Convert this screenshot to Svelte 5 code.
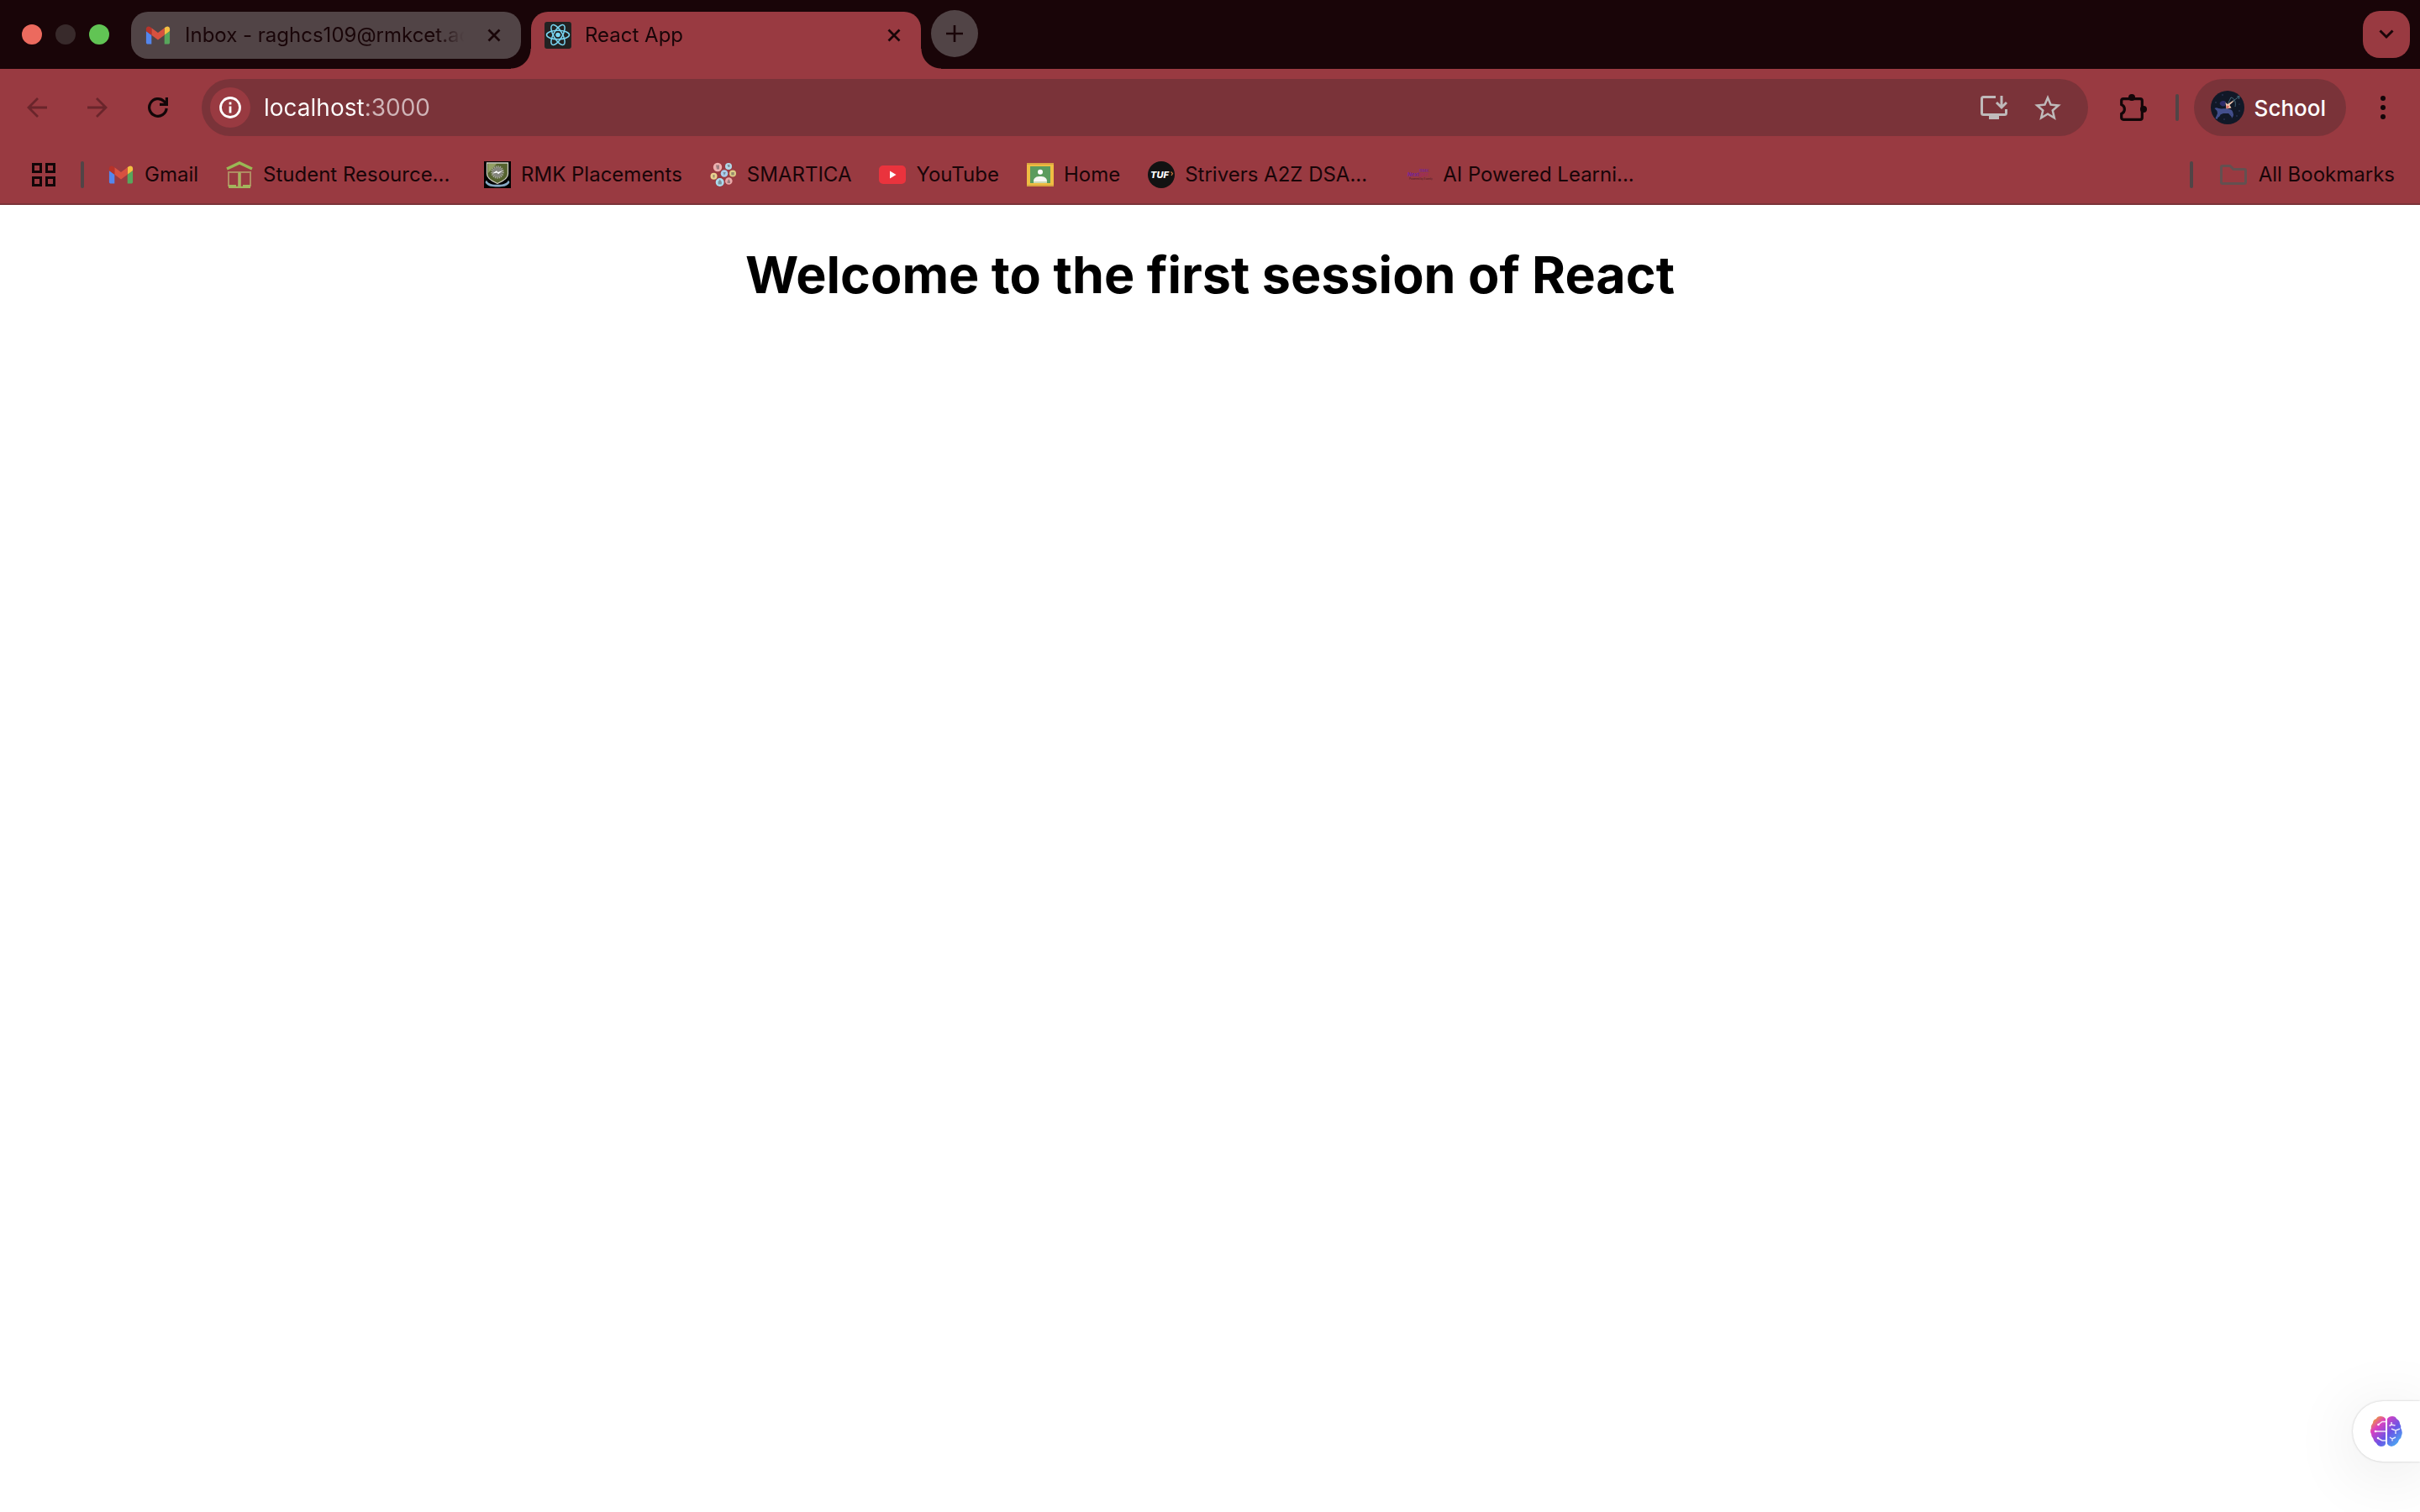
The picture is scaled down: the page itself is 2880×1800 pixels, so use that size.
<script>
  const tabs = [
    { title: 'Inbox - raghcs109@rmkcet.ac', icon: 'gmail', active: false },
    { title: 'React App', icon: 'react', active: true }
  ];

  const bookmarks = [
    { title: 'Gmail', icon: 'gmail' },
    { title: 'Student Resource...', icon: 'library', long: true },
    { title: 'RMK Placements', icon: 'crest' },
    { title: 'SMARTICA', icon: 'dots' },
    { title: 'YouTube', icon: 'youtube' },
    { title: 'Home', icon: 'classroom' },
    { title: 'Strivers A2Z DSA...', icon: 'tuf', long: true },
    { title: 'AI Powered Learni...', icon: 'nextgen', long: true }
  ];

  let address = $state('localhost:3000');
</script>

{#snippet favicon(name)}
  {#if name === 'gmail'}
    <svg class="favicon" viewBox="46 25 100 100" aria-hidden="true">
      <path fill="#5486ec" d="M58 108h14V74L52 59v43c0 3.32 2.69 6 6 6" />
      <path fill="#58a65c" d="M120 108h14c3.32 0 6-2.69 6-6V59l-20 15" />
      <path fill="#f3bf42" d="M120 48v26l20-15v-8c0-7.42-8.47-11.65-14.4-7.2" />
      <path fill="#d85140" d="M72 74V48l24 18 24-18v26L96 92" />
      <path fill="#b8332a" d="M52 51v8l20 15V48l-5.6-4.2c-5.94-4.45-14.4-.22-14.4 7.2" />
    </svg>
  {:else if name === 'react'}
    <svg class="favicon" viewBox="0 0 32 32" aria-hidden="true">
      <rect width="32" height="32" rx="3" fill="#222" />
      <g fill="none" stroke="#79d6f3" stroke-width="1.5">
        <ellipse cx="16" cy="15.5" rx="13.5" ry="5.2" />
        <ellipse cx="16" cy="15.5" rx="13.5" ry="5.2" transform="rotate(60 16 15.5)" />
        <ellipse cx="16" cy="15.5" rx="13.5" ry="5.2" transform="rotate(120 16 15.5)" />
      </g>
      <circle cx="16" cy="15.5" r="2.8" fill="#79d6f3" />
    </svg>
  {:else if name === 'library'}
    <svg class="favicon" viewBox="0 0 32 32" aria-hidden="true">
      <path d="M1 9 L16 2 L31 9" fill="none" stroke="#9ab955" stroke-width="3.4" />
      <g fill="none" stroke="#b08a62" stroke-width="2">
        <path d="M3 30V13H15V30M17 30V13H29V30" />
      </g>
      <path d="M16 13V30M3 31H29" stroke="#a3b55c" stroke-width="2.4" fill="none" />
      <path d="M3 29h9M20 29h9" stroke="#a3b55c" stroke-width="2" />
    </svg>
  {:else if name === 'crest'}
    <svg class="favicon" viewBox="0 0 32 32" aria-hidden="true">
      <rect width="32" height="32" fill="#020202" />
      <path d="M3.5 2H28.5V15C28.5 20 22 24 16 26.5C10 24 3.5 20 3.5 15Z" fill="#56632f" stroke="#cfcfc4" stroke-width="1.3" />
      <path d="M5 3H15L5 14Z" fill="#93a064" />
      <circle cx="16" cy="13" r="6" fill="#85857d" />
      <circle cx="16" cy="13" r="6.6" fill="none" stroke="#a5a59c" stroke-width="2.4" stroke-dasharray="1.4 1" />
      <path d="M9.5 14.8L15 11.2L16.5 13L22.5 11L17 15.2L15.4 13.6Z" fill="#fff" />
      <path d="M3 22.5C5 27.5 11 27.8 16 27.8S27 27.5 29 22.5L30.5 25C28 30 22 30.5 16 30.5S4 30 1.5 25Z" fill="#86a9c4" />
    </svg>
  {:else if name === 'dots'}
    <svg class="favicon" viewBox="0 0 32 32" aria-hidden="true">
      <circle cx="9" cy="7" r="5.2" fill="#edb0af" />
      <circle cx="22" cy="6" r="4" fill="#b1d9e8" />
      <circle cx="17" cy="14.5" r="4.3" fill="#a9cdec" />
      <circle cx="27" cy="14.5" r="4" fill="#dccb86" />
      <circle cx="4.5" cy="17.7" r="4" fill="#e9d18e" />
      <circle cx="11.7" cy="25" r="5" fill="#abdcee" />
      <circle cx="22.3" cy="23.5" r="4.3" fill="#eaa9a9" />
      <g fill="#5b5458" opacity="0.55">
        <path d="M7 4.5h4v5H8zM20.5 4h3v3h-2zM15.5 13h3.4l-2 4zM25.3 13h3.4v3.4h-3.4zM3.5 16h2v3.4h-2zM9.6 24.5l2.1-3 2.1 3v3H9.6zM20.6 24l1.7-3 1.7 3v2h-3.4z" />
      </g>
    </svg>
  {:else if name === 'youtube'}
    <svg class="favicon" viewBox="0 0 32 32" aria-hidden="true">
      <rect y="5" width="32" height="22" rx="5" fill="#ea333d" />
      <path d="M13 11.5V20.5L20.5 16Z" fill="#fff" />
    </svg>
  {:else if name === 'classroom'}
    <svg class="favicon" viewBox="0 0 32 32" aria-hidden="true">
      <rect y="2" width="32" height="28" fill="#d9a441" />
      <rect y="4" width="32" height="24" fill="#efbe42" />
      <rect x="4" y="6" width="24" height="20" fill="#5a9c5e" />
      <circle cx="16" cy="12.8" r="3" fill="#fff" />
      <path d="M8 24C8 19 12 18 16 18S24 19 24 24Z" fill="#f4f7f2" />
      <path d="M8 24H24V26H8Z" fill="#c9d8b6" />
    </svg>
  {:else if name === 'tuf'}
    <svg class="favicon" viewBox="0 0 32 32" aria-hidden="true">
      <circle cx="16" cy="16" r="16" fill="#121212" />
      <text class="tuf-text" x="3" y="20">TUF</text>
      <path d="M27.5 12.5L29.5 14.5L28 17" fill="none" stroke="#c9703a" stroke-width="1.2" />
    </svg>
  {:else if name === 'nextgen'}
    <svg class="favicon" viewBox="0 0 32 32" aria-hidden="true">
      <text class="ng-top" x="16" y="13">RMK</text>
      <text class="ng-main" x="2" y="18">Next<tspan fill="#a02a5e">gen</tspan></text>
      <text class="ng-sub" x="4" y="22">Powered by Examly</text>
    </svg>
  {/if}
{/snippet}

{#snippet cross()}
  <svg class="cross" viewBox="0 0 16 16" aria-hidden="true">
    <path d="M1.5 1.5L14.5 14.5M14.5 1.5L1.5 14.5" fill="none" stroke="#190508" stroke-width="2.8" />
  </svg>
{/snippet}

<div class="window">
  <header>
    <div class="strip">
      <div class="lights">
        <button class="light close-light" aria-label="Close window"></button>
        <button class="light min-light" aria-label="Minimise window"></button>
        <button class="light max-light" aria-label="Zoom window"></button>
      </div>
      <div class="tabs">
        {#each tabs as tab}
          <div class="tab" class:active={tab.active}>
            <button class="tab-title" aria-pressed={tab.active}>
              {@render favicon(tab.icon)}
              <span class="tab-text">{tab.title}</span>
            </button>
            <button class="tab-close" aria-label="Close tab">{@render cross()}</button>
          </div>
        {/each}
        <button class="new-tab" aria-label="New tab">
          <svg viewBox="0 0 20 20" aria-hidden="true">
            <path d="M10 0V20M0 10H20" stroke="#190508" stroke-width="2.6" />
          </svg>
        </button>
      </div>
      <button class="tab-search" aria-label="Search tabs">
        <svg viewBox="0 0 18 12" aria-hidden="true">
          <path d="M1.5 1.5L9 9L16.5 1.5" fill="none" stroke="#190508" stroke-width="3" />
        </svg>
      </button>
    </div>

    <div class="toolbar">
      <nav class="nav" aria-label="History">
        <button class="tool" aria-label="Back" disabled>
          <svg class="i24" viewBox="0 0 24 24" aria-hidden="true">
            <path d="M24 12H2.5M13 1L2 12L13 23" fill="none" stroke="#6a252b" stroke-width="2.8" />
          </svg>
        </button>
        <button class="tool" aria-label="Forward" disabled>
          <svg class="i24" viewBox="0 0 24 24" aria-hidden="true">
            <path d="M0 12H21.5M11 1L22 12L11 23" fill="none" stroke="#6a252b" stroke-width="2.8" />
          </svg>
        </button>
        <button class="tool" aria-label="Reload">
          <svg class="i24" viewBox="0 0 24 24" aria-hidden="true">
            <path d="M22.2 13A10.3 10.3 0 1 1 19.2 4.6L22 7.5" fill="none" stroke="#120608" stroke-width="3.2" />
            <path d="M22.4 0V8.4H14" fill="none" stroke="#120608" stroke-width="3.2" />
          </svg>
        </button>
      </nav>

      <div class="omnibox">
        <button class="info" aria-label="View site information">
          <svg viewBox="0 0 26 26" aria-hidden="true">
            <circle cx="13" cy="13" r="11.5" fill="none" stroke="#fff" stroke-width="2.8" />
            <path d="M13 11.4V19.4M13 6.6V9.4" stroke="#fff" stroke-width="2.8" />
          </svg>
        </button>
        <input class="address" type="text" aria-label="Address" spellcheck="false" bind:value={address} />
        <button class="tool" aria-label="Install app">
          <svg class="install" viewBox="0 0 32 28" aria-hidden="true">
            <path d="M18 1.5H3.5Q1.5 1.5 1.5 3.5V20.5Q1.5 22.5 3.5 22.5H28.5Q30.5 22.5 30.5 20.5V16" fill="none" stroke="#bfbaba" stroke-width="3" />
            <path d="M10 22H22V28H10Z" fill="#bfbaba" />
            <path d="M25 0V13M19 8L25 14L31 8" fill="none" stroke="#bfbaba" stroke-width="3" />
          </svg>
        </button>
        <button class="tool" aria-label="Bookmark this tab">
          <svg class="star" viewBox="2 2 20 19" aria-hidden="true">
            <path fill="#bfbaba" d="M22 9.24l-7.19-.62L12 2 9.19 8.63 2 9.24l5.46 4.73L5.82 21 12 17.27 18.18 21l-1.63-7.03L22 9.24zM12 15.4l-3.76 2.27 1-4.28-3.32-2.88 4.38-.38L12 6.1l1.71 4.04 4.38.38-3.32 2.88 1 4.28L12 15.4z" />
          </svg>
        </button>
      </div>

      <button class="tool extensions" aria-label="Extensions">
        <svg class="i32" viewBox="0 0 32 32" aria-hidden="true">
          <path d="M1.7 8Q1.7 5.7 4 5.7H24Q26.3 5.7 26.3 8V28Q26.3 30.3 24 30.3H4Q1.7 30.3 1.7 28V23.5C6.6 21.5 6.6 14.5 1.7 12.5Z" fill="none" stroke="#120608" stroke-width="3.2" />
          <circle cx="14" cy="4" r="4" fill="#120608" />
          <circle cx="28" cy="18" r="4" fill="#120608" />
        </svg>
      </button>
      <span class="divider"></span>
      <button class="profile">
        <svg class="avatar" viewBox="0 0 40 40" aria-hidden="true">
          <circle cx="20" cy="20" r="20" fill="#111827" />
          <path d="M4.5 21C7 19 10 22 13 21.5C17 21 21 21 24 22.5C26 23.5 26.5 26 27 29L25 33L24.3 28L21 27L15 27L10 29L7.5 34L5.5 33L8 27L7.5 24Z" fill="#434f8c" />
          <path d="M11 28L9 31M22 27L26 31" stroke="#434f8c" stroke-width="1.6" fill="none" />
          <path d="M10.5 15C12 11 16 11.5 18 13L17 18C14 19 11.5 18 10.5 15Z" fill="#2f2d6b" />
          <path d="M17.5 14L20 16L27 11.5L27.5 12.5L22.5 17L24.5 20.5L18.5 21.5Z" fill="#f0c6ae" />
          <path d="M18.5 17.5L22 18L21 21H18.5Z" fill="#d9736d" />
          <path d="M24 8C29 9 30 15 29 19M24 8L20.5 15.5M26 12.5L34 7M31 7L34 6.5L33.5 10" fill="none" stroke="#50788a" stroke-width="0.8" />
          <g fill="#3d4a78">
            <circle cx="14" cy="5" r="0.7" /><circle cx="6" cy="14" r="0.7" /><circle cx="34" cy="24" r="0.7" />
            <circle cx="31" cy="30" r="0.7" /><circle cx="16" cy="34" r="0.7" /><circle cx="34" cy="16" r="0.6" />
          </g>
        </svg>
        <span>School</span>
      </button>
      <button class="tool menu" aria-label="Menu">
        <svg viewBox="0 0 6 28" aria-hidden="true">
          <circle cx="3" cy="3" r="3" /><circle cx="3" cy="14" r="3" /><circle cx="3" cy="25" r="3" />
        </svg>
      </button>
    </div>

    <nav class="bookmarks" aria-label="Bookmarks">
      <button class="tool apps" aria-label="Apps">
        <svg viewBox="0 0 28 28" aria-hidden="true">
          <path d="M1.5 1.5H10.5V10.5H1.5ZM17.5 1.5H26.5V10.5H17.5ZM1.5 17.5H10.5V26.5H1.5ZM17.5 17.5H26.5V26.5H17.5Z" fill="none" stroke="#120608" stroke-width="3" />
        </svg>
      </button>
      <span class="divider"></span>
      <div class="links">
        {#each bookmarks as item}
          <a class="bookmark" href="#top">
            {@render favicon(item.icon)}
            <span class="label" class:long={item.long}>{item.title}</span>
          </a>
        {/each}
      </div>
      <span class="divider"></span>
      <button class="all">
        <svg viewBox="0 0 32 24" aria-hidden="true">
          <path d="M3 1.5H12L16 5.5H29Q30.5 5.5 30.5 7V21Q30.5 22.5 29 22.5H3Q1.5 22.5 1.5 21V3Q1.5 1.5 3 1.5Z" fill="none" stroke="#635050" stroke-width="3" />
        </svg>
        <span>All Bookmarks</span>
      </button>
    </nav>
  </header>

  <main>
    <h1>Welcome to the first session of React</h1>
  </main>

  <button class="assistant" aria-label="Open assistant">
    <svg viewBox="0 0 38 36" aria-hidden="true">
      <defs>
        <linearGradient id="brain" x1="0" y1="0" x2="1" y2="1">
          <stop offset="0.08" stop-color="#f0a032" />
          <stop offset="0.28" stop-color="#dc3fc0" />
          <stop offset="0.58" stop-color="#6a55e6" />
          <stop offset="0.95" stop-color="#45b8f5" />
        </linearGradient>
      </defs>
      <path d="M18 3Q16 0 12 0Q8 0 7 3Q3 4 3 8Q0 12 1 14Q-1 18 1 21Q1 24 3 26Q4 30 7 32Q9 36 13 36Q17 36 18 33ZM20 3Q22 0 26 0Q30 0 31 3Q35 5 35 9Q37 12 36 14Q39 18 37 23Q37 26 34 28Q33 32 31 33Q28 36 25 36Q22 36 20 33Z" fill="url(#brain)" />
      <g fill="none" stroke="#fff" stroke-width="1.5" opacity="0.85">
        <path d="M18 6.5H14L10 9.5M18 18H6M18 29H14L9.5 26.5M25 7V10L22.5 11.5M25 10L29.5 11M25 15L30 17L35 15M30 17V21M23 25L26 27L30 25M26 27V29.5" />
      </g>
      <g fill="#fff"><circle cx="9.5" cy="10" r="1.3" /><circle cx="6" cy="18" r="1.3" /><circle cx="9" cy="26" r="1.3" /></g>
    </svg>
  </button>
</div>

<style>
  :global(body) {
    margin: 0;
    background: #fff;
  }

  .window {
    --red: #993a41;
    --deep: #7a3339;
    --ink: #190508;
    --grey: #514446;
    display: flex;
    flex-direction: column;
    min-height: 100vh;
    font-family: Inter, 'Liberation Sans', sans-serif;
    font-size: 24px;
    color: var(--ink);
  }

  button {
    border: 0;
    padding: 0;
    margin: 0;
    background: none;
    font: inherit;
    color: inherit;
    display: flex;
    align-items: center;
    justify-content: center;
    flex: none;
  }

  svg {
    display: block;
    flex: none;
  }

  .favicon {
    width: 32px;
    height: 32px;
  }

  .strip {
    display: flex;
    align-items: center;
    height: 82px;
    padding: 0 12px 0 26px;
    background: var(--ink);
  }

  .lights {
    display: flex;
    gap: 16px;
    margin-right: 26px;
  }

  .light {
    width: 24px;
    height: 24px;
    border-radius: 50%;
  }

  .close-light { background: #ec6a5e; }
  .min-light { background: #382a2b; }
  .max-light { background: #61c454; }

  .tabs {
    display: flex;
    flex: 1;
    align-items: flex-start;
    align-self: stretch;
    gap: 12px;
    padding-top: 14px;
    min-width: 0;
  }

  .tab {
    position: relative;
    display: flex;
    align-items: center;
    flex: 0 1 464px;
    min-width: 0;
    height: 56px;
    box-sizing: border-box;
    padding: 0 20px 0 16px;
    border-radius: 20px;
    background: var(--grey);
  }

  .tab.active {
    height: 68px;
    padding-bottom: 12px;
    border-radius: 20px 20px 0 0;
    background: var(--red);
  }

  .tab.active::before,
  .tab.active::after {
    content: '';
    position: absolute;
    bottom: 0;
    width: 24px;
    height: 24px;
  }

  .tab.active::before {
    right: 100%;
    background: radial-gradient(circle at 0 0, transparent 23px, var(--red) 24px);
  }

  .tab.active::after {
    left: 100%;
    background: radial-gradient(circle at 100% 0, transparent 23px, var(--red) 24px);
  }

  .tab-title {
    flex: 1;
    min-width: 0;
    gap: 16px;
    justify-content: flex-start;
  }

  .tab-text {
    flex: 1;
    overflow: hidden;
    white-space: nowrap;
    text-align: left;
    line-height: 32px;
    mask-image: linear-gradient(to left, transparent 12px, #000 44px);
  }

  .tab-close {
    width: 24px;
    height: 24px;
    margin-left: 12px;
  }

  .cross {
    width: 16px;
    height: 16px;
  }

  .new-tab {
    width: 56px;
    height: 56px;
    margin-top: -2px;
    border-radius: 50%;
    background: var(--grey);
  }

  .new-tab svg {
    width: 20px;
    height: 20px;
  }

  .tab-search {
    width: 56px;
    height: 56px;
    border-radius: 20px;
    background: var(--red);
  }

  .tab-search svg {
    width: 18px;
    height: 12px;
  }

  .toolbar {
    display: flex;
    align-items: center;
    height: 92px;
    padding: 0 20px;
    background: var(--red);
  }

  .nav {
    display: flex;
    gap: 24px;
    margin-right: 28px;
  }

  .tool {
    width: 48px;
    height: 48px;
  }

  .i24 { width: 24px; height: 24px; }
  .i32 { width: 32px; height: 32px; }
  .install { width: 32px; height: 28px; }
  .star { width: 32px; height: 30px; }

  .omnibox {
    display: flex;
    align-items: center;
    flex: 1;
    min-width: 0;
    height: 68px;
    box-sizing: border-box;
    padding: 0 24px 0 10px;
    gap: 16px;
    border-radius: 34px;
    background: var(--deep);
  }

  .info {
    width: 48px;
    height: 48px;
    border-radius: 50%;
    background: var(--red);
  }

  .info svg {
    width: 26px;
    height: 26px;
  }

  .address {
    flex: 1;
    min-width: 0;
    height: 40px;
    padding: 0;
    border: 0;
    outline: 0;
    font: inherit;
    font-size: 28px;
    color: #fff;
    background: linear-gradient(to right, #fff 119px, #d0b5b8 119px);
    background-clip: text;
    -webkit-text-fill-color: transparent;
  }

  .divider {
    flex: none;
    width: 4px;
    height: 32px;
    border-radius: 2px;
    background: var(--grey);
  }

  .extensions {
    margin: 0 26px 0 30px;
  }

  .profile {
    height: 68px;
    margin: 0 20px 0 18px;
    padding: 0 24px 0 20px;
    gap: 12px;
    border-radius: 34px;
    background: var(--deep);
    color: #fff;
    font-size: 26px;
    font-weight: 500;
  }

  .avatar {
    width: 40px;
    height: 40px;
  }

  .menu svg {
    width: 6px;
    height: 28px;
    fill: #120608;
  }

  .bookmarks {
    display: flex;
    align-items: center;
    height: 68px;
    padding: 0 30px 0 28px;
    border-bottom: 2px solid var(--deep);
    background: var(--red);
  }

  .apps {
    margin-right: 20px;
  }

  .apps svg {
    width: 28px;
    height: 28px;
  }

  .links {
    display: flex;
    flex: 1;
    min-width: 0;
    gap: 33px;
    padding-left: 28px;
  }

  .bookmark {
    display: flex;
    align-items: center;
    gap: 12px;
    color: inherit;
    text-decoration: none;
    white-space: nowrap;
  }

  .label {
    line-height: 32px;
  }

  .long {
    width: 230px;
  }

  .all {
    margin-left: 32px;
    gap: 14px;
    line-height: 32px;
  }

  .all svg {
    width: 32px;
    height: 24px;
  }

  .tuf-text {
    font: italic 800 11px Inter, sans-serif;
    fill: #fff;
  }

  .ng-top {
    font: 700 5px Inter, sans-serif;
    fill: #7c2a84;
  }

  .ng-main {
    font: italic 700 6px Inter, sans-serif;
    fill: #75239b;
  }

  .ng-sub {
    font: 3px Inter, sans-serif;
    fill: #4a1c22;
  }

  main {
    flex: 1;
    padding: 0 32px;
  }

  h1 {
    margin: 43px 0;
    font-size: 61px;
    line-height: 80px;
    font-weight: 700;
    text-align: center;
    color: #000;
  }

  .assistant {
    position: fixed;
    right: 0;
    bottom: 60px;
    width: 80px;
    height: 72px;
    border-radius: 36px 0 0 36px;
    background: #fff;
    box-shadow: 0 0 3px rgba(0, 0, 0, 0.22), 0 12px 80px rgba(0, 0, 0, 0.1);
  }

  .assistant svg {
    width: 38px;
    height: 36px;
  }
</style>
